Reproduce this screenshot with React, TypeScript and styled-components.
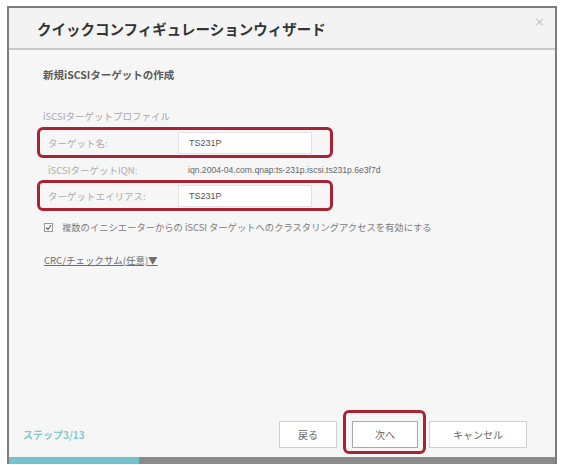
import React from "react";
import styled, { createGlobalStyle } from "styled-components";

const Global = createGlobalStyle`
  html, body { margin: 0; padding: 0; background: #ffffff; }
  body { font-family: "Noto Sans CJK JP", "Noto Sans", sans-serif; }
  * { box-sizing: border-box; }
`;

const Page = styled.div`
  width: 562px;
  height: 465px;
  padding: 6px 5px 1px 7px;
`;

const Dialog = styled.div`
  width: 550px;
  height: 458px;
  border: 2px solid #7c7c7c;
  border-bottom: none;
  background: #f6f6f6;
  display: flex;
  flex-direction: column;
`;

const Header = styled.div`
  height: 42px;
  background: #f3f3f3;
  border-bottom: 2px solid #c9c9c9;
  display: flex;
  align-items: center;
  justify-content: space-between;
  padding: 0 10px 0 28px;
`;

const Title = styled.div`
  font-size: 14.5px;
  font-weight: 700;
  color: #333333;
`;

const Close = styled.div`
  font-family: "DejaVu Sans", sans-serif;
  font-size: 13px;
  color: #c4c4c4;
  align-self: flex-start;
  margin-top: 6px;
`;

const Body = styled.div`
  flex: 1;
  padding: 18px 0 0 34px;
  display: flex;
  flex-direction: column;
`;

const SectionTitle = styled.div`
  font-size: 10.5px;
  line-height: 14px;
  font-weight: 700;
  color: #5a5a5a;
`;

const SubLabel = styled.div`
  margin-top: 27px;
  font-size: 9.5px;
  line-height: 14px;
  color: #a8a8a8;
`;

const Highlight = styled.div<{ $top: number }>`
  margin-top: ${(p) => p.$top}px;
  margin-left: -6px;
  width: 296px;
  height: 31px;
  border: 3px solid #a82434;
  border-radius: 6px;
  display: flex;
  align-items: center;
  padding-left: 8px;
`;

const FieldLabel = styled.div`
  width: 130px;
  font-size: 9.5px;
  color: #acacac;
`;

const Input = styled.div`
  width: 134px;
  height: 22px;
  background: #ffffff;
  border: 1px solid #e2e2e2;
  display: flex;
  align-items: center;
  padding-left: 10px;
  font-family: "Liberation Sans", sans-serif;
  font-size: 9px;
  color: #555555;
`;

const InfoRow = styled.div`
  margin-top: 5px;
  display: flex;
  align-items: center;
  height: 14px;
  padding-left: 5px;
`;

const InfoValue = styled.div`
  margin-left: 10px;
  font-family: "Liberation Sans", sans-serif;
  font-size: 8.6px;
  color: #666666;
`;

const CheckRow = styled.div`
  margin-top: 9px;
  display: flex;
  align-items: center;
  height: 14px;
  padding-left: 1px;
`;

const CheckBox = styled.span`
  width: 9px;
  height: 9px;
  border: 1px solid #9a9a9a;
  background: #fff;
  display: inline-flex;
  align-items: center;
  justify-content: center;
  margin-right: 9px;
`;

const CheckText = styled.span`
  font-size: 9.3px;
  color: #7a7a7a;
`;

const CrcLink = styled.div`
  margin-top: 19px;
  margin-left: 1px;
  font-size: 9.5px;
  line-height: 14px;
  color: #6e6e6e;
  text-decoration: underline;
`;

const Footer = styled.div`
  height: 48px;
  display: flex;
  align-items: flex-start;
  padding: 12px 28px 0 14px;
`;

const Step = styled.div`
  margin-top: 6px;
  font-size: 10px;
  font-weight: 700;
  color: #86c6d0;
  flex: 1;
`;

const Button = styled.div<{ $w: number; $strong?: boolean }>`
  position: relative;
  width: ${(p) => p.$w}px;
  height: 27px;
  background: #ffffff;
  border: 1px solid ${(p) => (p.$strong ? "#a9a9a9" : "#d0d0d0")};
  display: flex;
  align-items: center;
  justify-content: center;
  font-size: 10px;
  color: #666666;
`;

const ButtonGap = styled.div<{ $w: number }>`
  width: ${(p) => p.$w}px;
`;

const RedMark = styled.span`
  position: absolute;
  left: -10px;
  right: -9px;
  top: -12px;
  bottom: -7px;
  border: 3px solid #a82434;
  border-radius: 6px;
  pointer-events: none;
`;

const Progress = styled.div`
  height: 7px;
  display: flex;
  background: #8a8a8a;
`;

const ProgressFill = styled.div`
  background: #74c2d0;
  height: 100%;
`;

export default function App() {
  const step = 3;
  const total = 13;
  return (
    <>
      <Global />
      <Page>
        <Dialog>
          <Header>
            <Title>クイックコンフィギュレーションウィザード</Title>
            <Close>×</Close>
          </Header>
          <Body>
            <SectionTitle>新規iSCSIターゲットの作成</SectionTitle>
            <SubLabel>iSCSIターゲットプロファイル</SubLabel>
            <Highlight $top={4}>
              <FieldLabel>ターゲット名:</FieldLabel>
              <Input>TS231P</Input>
            </Highlight>
            <InfoRow>
              <FieldLabel>iSCSIターゲットIQN:</FieldLabel>
              <InfoValue>iqn.2004-04.com.qnap:ts-231p.iscsi.ts231p.6e3f7d</InfoValue>
            </InfoRow>
            <Highlight $top={3}>
              <FieldLabel>ターゲットエイリアス:</FieldLabel>
              <Input>TS231P</Input>
            </Highlight>
            <CheckRow>
              <CheckBox>
                <svg width="7" height="7" viewBox="0 0 7 7">
                  <path d="M1 3.5 L3 5.5 L6 1" fill="none" stroke="#666" strokeWidth="1.2" />
                </svg>
              </CheckBox>
              <CheckText>複数のイニシエーターからの iSCSI ターゲットへのクラスタリングアクセスを有効にする</CheckText>
            </CheckRow>
            <CrcLink>CRC/チェックサム(任意)▼</CrcLink>
          </Body>
          <Footer>
            <Step>ステップ{step}/{total}</Step>
            <Button $w={58}>戻る</Button>
            <ButtonGap $w={15} />
            <Button $w={66} $strong>
              次へ
              <RedMark />
            </Button>
            <ButtonGap $w={11} />
            <Button $w={98}>キャンセル</Button>
          </Footer>
          <Progress>
            <ProgressFill style={{ width: `${(step / total) * 100 * 1.03}%` }} />
          </Progress>
        </Dialog>
      </Page>
    </>
  );
}
